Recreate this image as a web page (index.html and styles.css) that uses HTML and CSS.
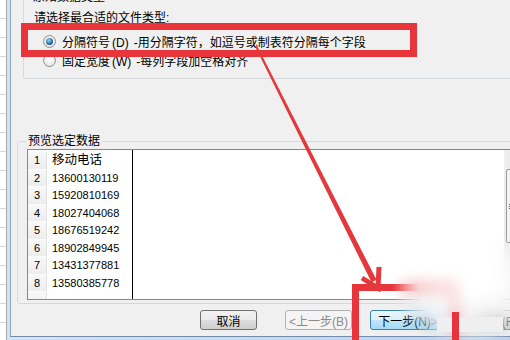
FILE: index.html
```html
<!DOCTYPE html>
<html lang="zh-CN">
  <head>
    <meta charset="UTF-8" />
    <title>文本导入向导</title>
    <link rel="stylesheet" href="styles.css">
  </head>
  <body>
    <div class="shot">
      <!-- 背后的表格 -->
      <div class="sheet"></div>

      <!-- 向导窗口 -->
      <div class="window">
        <div class="dialog">
          <div class="group type-group">
            <div class="group-title">原始数据类型</div>
            <div class="hint">请选择最合适的文件类型:</div>
            <div class="radio-row">
              <span class="radio on"></span>
              <span>分隔符号<span class="key">(D)</span>-用分隔字符，如逗号或制表符分隔每个字段</span>
            </div>
            <div class="radio-row">
              <span class="radio"></span>
              <span>固定宽度<span class="key">(W)</span>-每列字段加空格对齐</span>
            </div>
          </div>

          <div class="group preview-group">
            <div class="group-title">预览选定数据</div>
            <div class="grid">
              <div class="cells">
                <div class="row head"><span class="num">1</span><span class="val">移动电话</span></div>
                <div class="row"><span class="num">2</span><span class="val">13600130119</span></div>
                <div class="row"><span class="num">3</span><span class="val">15920810169</span></div>
                <div class="row"><span class="num">4</span><span class="val">18027404068</span></div>
                <div class="row"><span class="num">5</span><span class="val">18676519242</span></div>
                <div class="row"><span class="num">6</span><span class="val">18902849945</span></div>
                <div class="row"><span class="num">7</span><span class="val">13431377881</span></div>
                <div class="row"><span class="num">8</span><span class="val">13580385778</span></div>
                <div class="row"><span class="num"></span><span class="val"></span></div>
              </div>
              <div class="vscroll">
                <div class="sb-up"></div>
                <div class="sb-thumb"></div>
              </div>
            </div>
          </div>

          <div class="buttons">
            <div class="btn">取消</div>
            <div class="btn disabled">&lt;上一步(B)</div>
            <div class="btn default">下一步(N)&gt;</div>
            <div class="btn">完成(F)</div>
          </div>
        </div>
      </div>

      <!-- 标注 -->
      <svg class="marks" width="510" height="340" viewBox="0 0 510 340">
        <rect x="24.5" y="26.5" width="389" height="27" fill="none" stroke="#e8353b" stroke-width="7" />
        <rect x="355.5" y="287.5" width="100" height="60" fill="none" stroke="#e8353b" stroke-width="7" />
        <polygon points="256.9,45.6 376.5,279.7 371.5,282.3 255.1,46.4" fill="#e4393c" />
        <polyline points="362,278 378,288 379,267" fill="none" stroke="#e4393c" stroke-width="5" />
      </svg>
      <div class="watermark"></div>
      <div class="wm-bar"></div>
      <div class="mark-edge"></div>
    </div>
  </body>
</html>
```

FILE: styles.css
```css
*,
*::before,
*::after {
  margin: 0;
  padding: 0;
  box-sizing: border-box;
}

body {
  font-family: "Liberation Sans", "Noto Sans CJK SC", sans-serif;
  font-size: 12px;
  color: #000;
  background: #fff;
}

/* ---------------- 整个画面 ---------------- */
.shot {
  position: relative;
  display: flex;
  width: 510px;
  height: 340px;
  overflow: hidden;
}

/* 左边露出来的表格 */
.sheet {
  width: 7px;
  flex: none;
  border-right: 1px solid #a9a9a9;
  background: repeating-linear-gradient(#fff 0 18px, #d6d6d6 18px 19px);
}

/* ---------------- 窗口 ---------------- */
.window {
  flex: none;
  width: 503px;
  height: 340px;
  overflow: hidden;
  padding: 0 0 3px 3px;
  background: linear-gradient(90deg, #d4e3f4, #bcd2ec);
}

.dialog {
  width: 560px;
  height: 337px;
  overflow: hidden;
  background: #f0f0f0;
  border-left: 1px solid #8ea5c0;
  border-bottom: 1px solid #6f8cae;
}

/* ---------------- 分组框 ---------------- */
.group {
  border: 1px solid #d5d9dc;
  border-radius: 3px;
}

.group-title {
  width: fit-content;
  margin: -8px 0 0 7px;
  padding: 0 2px;
  line-height: 14px;
  background: #f0f0f0;
}

.type-group {
  width: 540px;
  margin: -3px 0 0 12px;
  padding-bottom: 10px;
}

.hint {
  margin: 7px 0 0 10px;
  line-height: 14px;
}

.radio-row {
  display: flex;
  align-items: center;
  gap: 6px;
  height: 16px;
  margin: 8px 0 0 19px;
}

.radio-row + .radio-row {
  margin-top: 3px;
}

.key {
  margin: 0 5px 0 2px;
}

.radio {
  display: flex;
  justify-content: center;
  align-items: center;
  width: 13px;
  height: 13px;
  border-radius: 50%;
  border: 1px solid #8d8f91;
  background: radial-gradient(circle at 50% 40%, #ffffff, #dcdcdc);
}

.radio.on::after {
  content: "";
  width: 7px;
  height: 7px;
  border-radius: 50%;
  background: radial-gradient(circle at 40% 35%, #9ad6f8, #2a6f9e 55%, #0d3556);
}

/* ---------------- 预览 ---------------- */
.preview-group {
  width: 540px;
  margin: 62px 0 0 6px;
  padding-bottom: 3px;
}

.preview-group .group-title {
  margin-left: 8px;
}

.grid {
  display: flex;
  width: 495px;
  height: 151px;
  margin: 1px 0 0 9px;
  border: 1px solid #828790;
  border-right: none;
}

.cells {
  width: 476px;
  padding-top: 2px;
  overflow: hidden;
  background: linear-gradient(#000, #000) 104px 0 / 1px 100% no-repeat, #fff;
}

.row {
  display: flex;
  height: 17.5px;
  align-items: stretch;
  font-size: 11px;
}

.num {
  width: 19px;
  padding-left: 6px;
  line-height: 16px;
  background: linear-gradient(#f8f8f8, #ededed);
  border-bottom: 1px solid #fcfcfc;
  border-right: 1px solid #e2e2e2;
}

.val {
  padding-left: 5px;
  line-height: 17px;
}

.row.head .val {
  font-size: 12.5px;
}

/* 滚动条 */
.vscroll {
  width: 17px;
  background: #ececec;
}

.sb-up {
  height: 19px;
  background: linear-gradient(90deg, #f0f0f0, #e2e2e2);
}

.sb-thumb {
  position: relative;
  height: 74px;
  margin-left: 2px;
  border: 1px solid #9a9a9a;
  border-radius: 2px;
  background: linear-gradient(90deg, #f6f6f6, #dedede);
}

.sb-thumb::after {
  content: "";
  position: absolute;
  left: 2px;
  top: 34px;
  width: 2px;
  height: 6px;
  background: repeating-linear-gradient(#555 0 1px, transparent 1px 2px);
}

/* ---------------- 按钮 ---------------- */
.buttons {
  display: flex;
  margin-top: 6px;
  padding-left: 189px;
}

.btn {
  display: flex;
  justify-content: center;
  align-items: center;
  height: 20px;
  border: 1px solid #707070;
  border-radius: 3px;
  background: linear-gradient(#f2f2f2 0%, #ebebeb 50%, #dddddd 51%, #cfcfcf 100%);
}

.btn:nth-child(1) {
  width: 57px;
}

.btn:nth-child(2) {
  width: 67px;
  margin-left: 28px;
}

.btn:nth-child(3) {
  width: 76px;
  margin-left: 18px;
}

.btn:nth-child(4) {
  width: 75px;
  margin-left: 14px;
}

.btn.disabled {
  border-color: #adb2b5;
  background: #f4f4f4;
  color: #8a8a8a;
}

.btn.default {
  border-color: #3c7fb1;
  background: linear-gradient(#eaf6fd 0%, #d9f0fc 50%, #bee6fd 51%, #a7d9f5 100%);
}

/* ---------------- 标注与水印 ---------------- */
.marks {
  position: absolute;
  left: 0;
  top: 0;
}

.watermark {
  position: absolute;
  left: 392px;
  top: 238px;
  width: 140px;
  height: 110px;
  background: radial-gradient(ellipse at 55% 50%, rgba(255, 255, 255, 0.85), rgba(255, 255, 255, 0.4) 60%, rgba(255, 255, 255, 0) 75%);
  backdrop-filter: blur(7px);
  -webkit-mask-image: radial-gradient(ellipse at 55% 45%, #000 45%, transparent 72%);
  mask-image: radial-gradient(ellipse at 55% 45%, #000 45%, transparent 72%);
}

.wm-bar {
  position: absolute;
  left: 437px;
  top: 317px;
  width: 66px;
  height: 15px;
  background: #efefef;
}

.mark-edge {
  position: absolute;
  left: 452px;
  top: 312px;
  width: 7px;
  height: 28px;
  background: #e8353b;
}
```
